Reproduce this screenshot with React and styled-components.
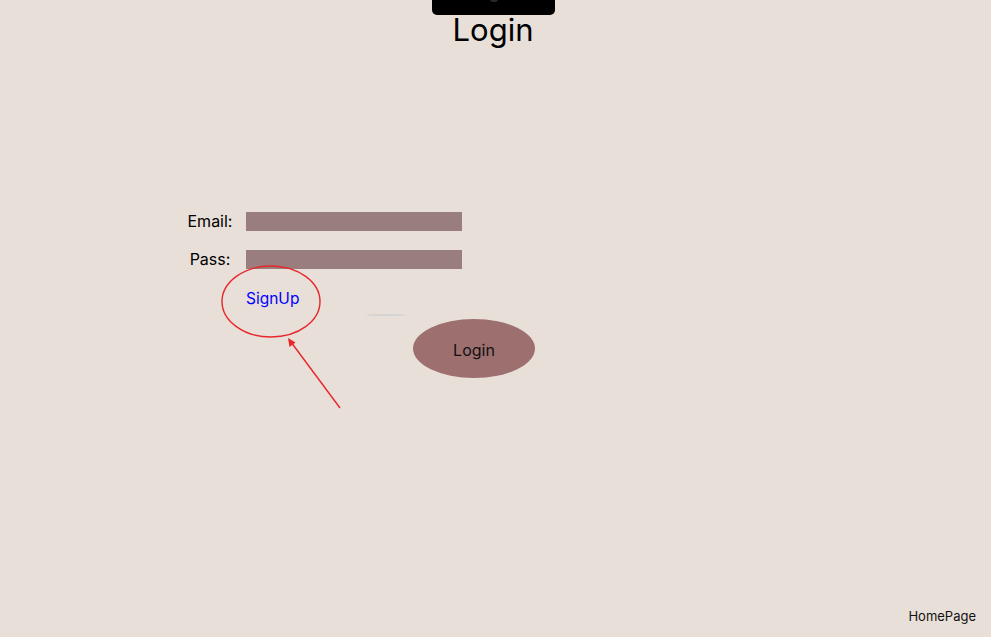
import React from 'react'
import styled, { createGlobalStyle } from 'styled-components'

export default function App() {
    return (
        <Page>
            <GlobalStyle />
            <Notch><NotchDot /></Notch>
            <Title>Login</Title>
            <Form>
                <Label>Email:</Label>
                <Field type="email" />
                <Label>Pass:</Label>
                <Field type="password" />
                <SignUp href="#signup">SignUp</SignUp>
            </Form>
            <Actions>
                <Shadow />
                <LoginButton>Login</LoginButton>
            </Actions>
            <Footer>HomePage</Footer>

            <Annotation width="991" height="637" viewBox="0 0 991 637">
                <ellipse cx="271" cy="301.5" rx="49" ry="35.5" fill="none" stroke="#e8262b" strokeWidth="1.4" />
                <line x1="340" y1="408" x2="291" y2="342" stroke="#e8262b" strokeWidth="1.4" />
                <polygon points="288,338 289.5,347 295.5,342.5" fill="#e8262b" />
            </Annotation>
        </Page>
    )
}


/**STYLED COMPONENTS */

const GlobalStyle = createGlobalStyle`
    html, body {
        margin: 0;
        padding: 0;
        background: #e7dfd8;
    }
    body {
        font-family: 'Inter', 'Noto Sans', sans-serif;
        color: #000;
    }
`;

const Page = styled.div`
    position: relative;
    min-height: 100vh;
    display: flex;
    flex-direction: column;
    overflow: hidden;
`;

const Notch = styled.div`
    position: absolute;
    top: 0;
    left: 432px;
    width: 123px;
    height: 15px;
    background: #000;
    border-radius: 0 0 5px 5px;
    display: flex;
    justify-content: center;
`;

const NotchDot = styled.div`
    width: 8px;
    height: 3px;
    margin-top: -1px;
    border-radius: 0 0 4px 4px;
    background: #2a2a2a;
`;

const Title = styled.h1`
    margin: 10px 0 0;
    padding-right: 5px;
    text-align: center;
    font-size: 31px;
    font-weight: 400;
    line-height: 39px;
`;

const Form = styled.div`
    margin: 163px 0 0 180px;
    display: grid;
    grid-template-columns: 60px 216px;
    grid-auto-rows: 19px;
    column-gap: 6px;
    row-gap: 19px;
    align-items: center;
`;

const Label = styled.label`
    text-align: center;
    font-size: 16px;
    line-height: 19px;
`;

const Field = styled.input`
    box-sizing: border-box;
    width: 216px;
    height: 19px;
    margin: 0;
    border: 0;
    padding: 0 4px;
    background: #9a7e7e;
    outline: none;
`;

const SignUp = styled.a`
    grid-column: 2;
    margin: 2px 0 0 0;
    font-size: 15.5px;
    line-height: 19px;
    color: #0000ff;
    text-decoration: none;
`;

const Actions = styled.div`
    margin: 7px 0 0 366px;
    display: flex;
    align-items: flex-start;
`;

const Shadow = styled.div`
    width: 40px;
    height: 2px;
    border-radius: 50%;
    background: #d3d3d3;
`;

const LoginButton = styled.button`
    margin: 5px 0 0 7px;
    padding: 3px 0 0;
    width: 122px;
    height: 59px;
    border: 0;
    border-radius: 50%;
    background: #9d6f6f;
    color: #111;
    font-family: 'Inter', sans-serif;
    font-size: 16px;
    cursor: pointer;
`;

const Footer = styled.div`
    margin-top: auto;
    align-self: flex-end;
    padding: 0 15px 13px 0;
    font-size: 13px;
    line-height: 16px;
    color: #111;
`;

const Annotation = styled.svg`
    position: absolute;
    top: 0;
    left: 0;
    pointer-events: none;
`;
